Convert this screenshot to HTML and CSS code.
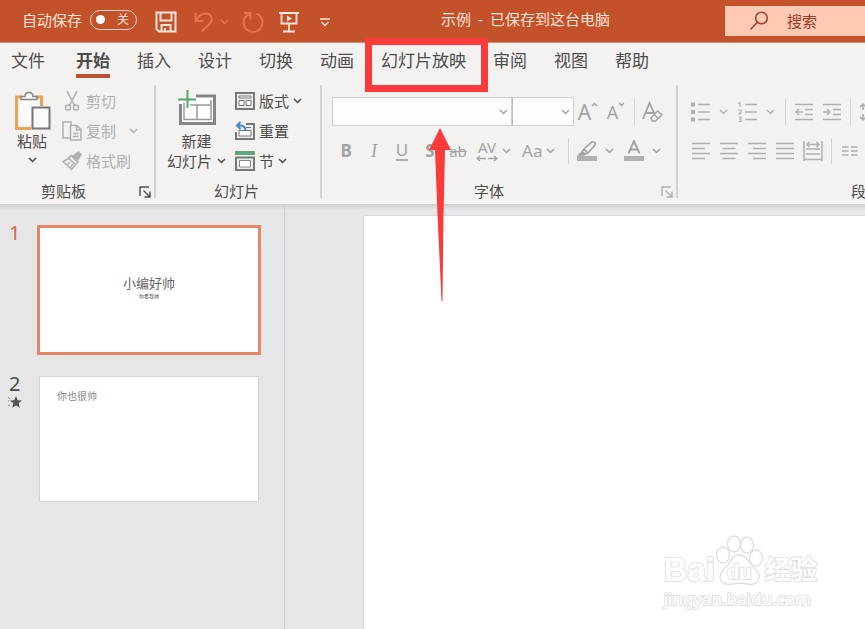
FILE: index.html
```
<!DOCTYPE html>
<html lang="zh-CN">
<head>
<meta charset="utf-8">
<title>示例</title>
<link rel="stylesheet" href="styles.css">
</head>
<body>
<svg class="defs" aria-hidden="true">
  <symbol id="chev" viewBox="0 0 9 6"><path d="M1 1l3.500 3.500L8 1" fill="none" stroke="currentColor" stroke-width="1.500"/></symbol>
  <symbol id="launch" viewBox="0 0 12 12"><path d="M1 10V1h9M4.500 4.500l6 6M11 5.500V11H5.500" fill="none" stroke="currentColor" stroke-width="1.400"/></symbol>
</svg>
<header class="titlebar">
  <label class="autosave">自动保存
    <span class="toggle"><input type="checkbox" role="switch"><span>关</span></span>
  </label>
  <div class="quick">
    <button aria-label="保存"><svg width="22" height="22" viewBox="0 0 22 22" fill="none" stroke="currentColor" stroke-width="2"><path d="M1.500 1.500h19v19H4l-2.500-2.500zM5.500 2v7.500h11V2M6.500 20v-6h9v6M10 20v-3"/></svg></button>
    <button class="faded undo" aria-label="撤消"><svg width="20" height="22" viewBox="0 0 20 22" fill="none" stroke="currentColor" stroke-width="2"><path d="M1.500 2v8h8M2 9.500C5 4 9 2 12.500 2.500c5 .7 7 6 3.500 10L8 20.500"/></svg><svg width="9" height="6"><use href="#chev"/></svg></button>
    <button class="faded" aria-label="恢复"><svg width="22" height="22" viewBox="0 0 22 22" fill="none" stroke="currentColor" stroke-width="2"><path d="M2 2h6.500v6.500M8 3C3.500 4.500 1.500 8 1.500 11.500a9.500 9.500 0 0 0 19 0c0-4-2.500-7.500-6-9"/></svg></button>
    <button class="present" aria-label="从头开始"><svg width="20" height="22" viewBox="0 0 20 22" fill="none" stroke="currentColor" stroke-width="1.800"><path d="M0 2h20M2.500 2v10.500h15V2M10 12.500V20M4 20.500h12"/><path d="M8 4.500l5 3-5 3z" fill="currentColor" stroke="none"/></svg></button>
    <button class="more" aria-label="自定义快速访问工具栏"><svg width="10" height="9" viewBox="0 0 10 9" fill="none" stroke="currentColor" stroke-width="1.500"><path d="M0 1h10M1.500 4L5 7.500 8.500 4"/></svg></button>
  </div>
  <h1 class="doc"><span>示例</span><span>-</span><span>已保存到这台电脑</span></h1>
  <label class="search">
    <svg width="20" height="20" viewBox="0 0 20 20" fill="none" stroke="currentColor" stroke-width="1.600"><circle cx="12.500" cy="7" r="5.800"/><path d="M8.500 11L1.500 18.500"/></svg>
    <input type="text" placeholder="搜索" aria-label="搜索">
  </label>
</header>

<nav class="tabs">
  <a href="#" class="file">文件</a>
  <a href="#" class="active">开始</a>
  <a href="#">插入</a>
  <a href="#">设计</a>
  <a href="#">切换</a>
  <a href="#">动画</a>
  <a href="#" class="marked">幻灯片放映
    <svg class="marker" width="123" height="263" viewBox="0 0 123 263" aria-hidden="true"><rect x="3.500" y="3.500" width="116" height="47" fill="none" stroke="#fb3a3a" stroke-width="7"/><path d="M75 90l11 22h-6l-1.500 65-1 86h-1L72.500 177 70 112h-6z" fill="#fb3a3a"/></svg>
  </a>
  <a href="#">审阅</a>
  <a href="#">视图</a>
  <a href="#">帮助</a>
</nav>

<section class="ribbon">
  <div class="group clipboard">
    <div class="body">
      <button class="big paste">
        <svg width="38" height="40" viewBox="0 0 38 40" fill="none"><path d="M9 6H3.500v31.500H18M23 6h5.500v9" stroke="#e9a453" stroke-width="3"/><path d="M7 8h18v8h-7v18H7z" fill="#fcfcfd"/><path d="M8 8.500V5.500h4C12 0 20 0 20 5.500h4v3z" fill="#fafafa" stroke="#858585" stroke-width="1.500"/><path d="M19.500 16.500h17v21h-17z" fill="#fafafd" stroke="#777" stroke-width="2"/></svg>
        <span>粘贴</span>
        <svg width="9" height="6"><use href="#chev"/></svg>
      </button>
      <div class="stack">
        <button class="small off"><svg width="20" height="20" viewBox="0 0 20 20" fill="none" stroke="currentColor" stroke-width="1.500"><path d="M5 0l7.500 14.500M15 0L7.500 14.500"/><circle cx="6" cy="16.500" r="2.500"/><circle cx="14" cy="16.500" r="2.500"/></svg><span>剪切</span></button>
        <button class="small off"><svg width="20" height="20" viewBox="0 0 20 20" fill="none" stroke="currentColor" stroke-width="1.500"><path d="M8 17H1V1h8v3"/><path d="M8.500 4.500h6.500l4 4v10.500H8.500zM14.500 5v4H19M11 12.500h5.500M11 15.500h5.500"/></svg><span>复制</span><svg class="gap" width="9" height="6"><use href="#chev"/></svg></button>
        <button class="small off"><svg width="20" height="20" viewBox="0 0 20 20" fill="none" stroke="currentColor" stroke-width="1.500"><path d="M9 4.500l7 6.500-2.500 2.500-7-6.500zM7 7.500L1 10.500l8.500 8 4-5M5 14l3-3M8 17l3-4"/><path d="M10 5.500l5 4.500 4-6.500-2.500-2.500z" fill="currentColor"/></svg><span>格式刷</span></button>
      </div>
    </div>
    <div class="foot"><span>剪贴板</span><button class="launch" aria-label="剪贴板选项"><svg width="12" height="12"><use href="#launch"/></svg></button></div>
  </div>

  <div class="group slides">
    <div class="body">
      <button class="big new">
        <svg width="40" height="38" viewBox="0 0 40 38" fill="none"><path d="M4 8h34v27H4z" fill="#fff"/><path d="M19 7h18.500v27.500h-34V15" stroke="#858585" stroke-width="3"/><path d="M8 16h26M20 16v15M7 14v16.500h27V11" stroke="#999" stroke-width="1.500"/><path d="M0 10h19M10.500 0v19" stroke="#f3f2f1" stroke-width="5"/><path d="M1 10.500h18M10.500 1v18" stroke="#55a873" stroke-width="2"/></svg>
        <span>新建</span>
        <span class="line">幻灯片<svg width="9" height="6"><use href="#chev"/></svg></span>
      </button>
      <div class="stack">
        <button class="small"><svg width="20" height="18" viewBox="0 0 20 18" fill="none" stroke="#777"><path d="M1 1h18v16H1z" fill="#ededed" stroke-width="2"/><path d="M4 4h12v2H4zM4 8.500h5v5H4zM11 8.500h5v5h-5z" fill="#fff"/></svg><span>版式</span><svg width="9" height="6"><use href="#chev"/></svg></button>
        <button class="small"><svg width="20" height="20" viewBox="0 0 20 20" fill="none" stroke="#777"><path d="M11 3h8v15H1V11" fill="#ededed" stroke-width="2"/><path d="M4 9.500h12v5.500H4zM11 6.500h5" fill="#fff"/><path d="M5.500 1L2 4.500 5.500 8M2.500 4.500h3c3.500 0 5 2 5 5.500" stroke="#3e8ccb" stroke-width="2"/></svg><span>重置</span></button>
        <button class="small"><svg width="20" height="20" viewBox="0 0 20 20" fill="none"><path d="M0 0h20v4H0z" fill="#5da57b"/><path d="M1 6.500h18V19H1z" fill="#ededed" stroke="#777" stroke-width="2"/><path d="M4.500 9.500h11v6.500h-11z" fill="#fff" stroke="#888"/></svg><span>节</span><svg width="9" height="6"><use href="#chev"/></svg></button>
      </div>
    </div>
    <div class="foot"><span>幻灯片</span></div>
  </div>

  <div class="group font">
    <div class="rows">
      <div class="row">
        <button class="combo family" aria-label="字体"><svg width="9" height="6"><use href="#chev"/></svg></button>
        <button class="combo size" aria-label="字号"><svg width="9" height="6"><use href="#chev"/></svg></button>
        <button class="tool grow" aria-label="增大字号"><span>A</span><svg width="7" height="5"><path d="M1 4l2.500-2.500L6 4" fill="none" stroke="currentColor" stroke-width="1.400"/></svg></button>
        <button class="tool grow shrink" aria-label="减小字号"><span>A</span><svg width="7" height="5"><path d="M1 1l2.500 2.500L6 1" fill="none" stroke="currentColor" stroke-width="1.400"/></svg></button>
        <i class="sep"></i>
        <button class="tool" aria-label="清除格式"><svg width="22" height="22" viewBox="0 0 22 22" fill="none" stroke="currentColor" stroke-width="1.800"><path d="M1 18L7.500 2 13 14M3.500 12h8"/><path d="M15.500 10l4.500 3.500-6.500 6.500h-3L9 17z" fill="#f3f2f1" stroke-width="1.400"/><path d="M12 13.500l4.500 4" stroke-width="1.400"/></svg></button>
      </div>
      <div class="row">
        <button class="tool"><b class="bold">B</b></button>
        <button class="tool"><span class="ital">I</span></button>
        <button class="tool"><span class="under">U</span></button>
        <button class="tool"><b class="bold">S</b></button>
        <button class="tool"><s>ab</s></button>
        <button class="split tight" aria-label="字符间距"><span class="kern">AV<svg width="22" height="7" viewBox="0 0 22 7" fill="none" stroke="currentColor" stroke-width="1.300"><path d="M10 3.500H1M4 1L1 3.500 4 6M12 3.500h9M18 1l3 2.500L18 6"/></svg></span><svg width="9" height="6"><use href="#chev"/></svg></button>
        <button class="split tight case" aria-label="更改大小写"><span>Aa</span><svg width="9" height="6"><use href="#chev"/></svg></button>
        <i class="sep"></i>
        <button class="split" aria-label="突出显示"><svg width="20" height="22" viewBox="0 0 20 22" fill="none" stroke="currentColor" stroke-width="1.600"><path d="M0 16h20v5H0z" fill="#b0b0b0" stroke="none"/><path d="M7 9l8-7c2-1 4 1 3 3l-7 8zM7 9l-2 3 3 2 3-1"/><path d="M5 12l-3 3h5l1-1z" fill="currentColor"/></svg><svg width="9" height="6"><use href="#chev"/></svg></button>
        <button class="split" aria-label="字体颜色"><svg width="20" height="22" viewBox="0 0 20 22" fill="none" stroke="currentColor" stroke-width="1.900"><path d="M0 16h20v5H0z" fill="#b0b0b0" stroke="none"/><path d="M4.500 13.500L10 1l5.500 12.500M6.500 9.500h7"/></svg><svg width="9" height="6"><use href="#chev"/></svg></button>
      </div>
    </div>
    <div class="foot"><span>字体</span><button class="launch off" aria-label="字体选项"><svg width="12" height="12"><use href="#launch"/></svg></button></div>
  </div>

  <div class="group para">
    <div class="rows">
      <div class="row">
        <button class="split" aria-label="项目符号"><svg width="20" height="20" viewBox="0 0 20 20" stroke="currentColor"><path d="M7 2.500h12M7 10h12M7 17.500h12" stroke-width="1.500"/><path d="M0 2.500h4M0 10h4M0 17.500h4" stroke-width="4"/></svg><svg width="9" height="6"><use href="#chev"/></svg></button>
        <button class="split" aria-label="编号"><svg width="20" height="20" viewBox="0 0 20 20" fill="none" stroke="currentColor"><path d="M7 2.500h12M7 10h12M7 17.500h12" stroke-width="1.500"/><path d="M0 1.500L2 .5V5M.5 8h2.500v2L.5 12H3.500M.5 15H3v2H1h2v2.500H.5" stroke-width="1.100"/></svg><svg width="9" height="6"><use href="#chev"/></svg></button>
        <i class="sep"></i>
        <button class="tool" aria-label="减少缩进"><svg width="20" height="20" viewBox="0 0 20 20" fill="none" stroke="currentColor" stroke-width="1.500"><path d="M1 2.500h18M1 17.500h18M11 7.500h8M11 12.500h8M9 10H2M5 7l-3 3 3 3"/></svg></button>
        <button class="tool" aria-label="增加缩进"><svg width="20" height="20" viewBox="0 0 20 20" fill="none" stroke="currentColor" stroke-width="1.500"><path d="M1 2.500h18M1 17.500h18M11 7.500h8M11 12.500h8M1 10h7M5 7l3 3-3 3"/></svg></button>
        <i class="sep"></i>
        <button class="tool" aria-label="行距"><svg width="20" height="20" viewBox="0 0 20 20" fill="none" stroke="currentColor" stroke-width="1.500"><path d="M4 2v6M1 5l3-3 3 3M4 12v6M1 15l3 3 3-3M10 3h9M10 10h9M10 17h9"/></svg></button>
      </div>
      <div class="row">
        <button class="tool" aria-label="左对齐"><svg width="20" height="20" viewBox="0 0 20 20" stroke="currentColor" stroke-width="1.500"><path d="M1 2.500h18M1 7.500h13M1 12.500h18M1 17.500h13"/></svg></button>
        <button class="tool" aria-label="居中"><svg width="20" height="20" viewBox="0 0 20 20" stroke="currentColor" stroke-width="1.500"><path d="M1 2.500h18M3.500 7.500h13M1 12.500h18M3.500 17.500h13"/></svg></button>
        <button class="tool" aria-label="右对齐"><svg width="20" height="20" viewBox="0 0 20 20" stroke="currentColor" stroke-width="1.500"><path d="M1 2.500h18M6 7.500h13M1 12.500h18M6 17.500h13"/></svg></button>
        <button class="tool" aria-label="两端对齐"><svg width="20" height="20" viewBox="0 0 20 20" stroke="currentColor" stroke-width="1.500"><path d="M1 2.500h18M1 7.500h18M1 12.500h18M1 17.500h18"/></svg></button>
        <button class="tool" aria-label="分散对齐"><svg width="20" height="22" viewBox="0 0 20 22" fill="none" stroke="currentColor" stroke-width="1.500"><path d="M1 1v20M19 1v20M3 9h14M3 14h14M1 19.500h18M4 4.500h12M6.500 2L4 4.500 6.500 7M13.500 2L16 4.500 13.500 7"/></svg></button>
        <i class="sep"></i>
        <button class="tool" aria-label="分栏"><svg width="18" height="20" viewBox="0 0 18 20" stroke="currentColor" stroke-width="1.500"><path d="M1 6h6.500M1 10h6.500M1 14h6.500M10 6h6.500M10 10h6.500M10 14h6.500"/></svg></button>
      </div>
    </div>
    <div class="foot"><span>段落</span></div>
  </div>
</section>

<main class="work">
  <aside class="thumbs">
    <div class="thumb current">
      <div class="num">1</div>
      <div class="slide cover"><p class="heading">小编好帅</p><p class="sub">你看我帅</p></div>
    </div>
    <div class="thumb">
      <div class="num">2<svg width="14" height="14" viewBox="0 0 14 14"><path d="M8 1l1.700 4.200 4.300.3-3.300 2.800 1.100 4.500L8 10.500l-3.800 2.300 1.100-4.500L2 5.500l4.300-.3z" fill="#555"/><path d="M0 2l2 2M0 6h1M0 11l2-1" stroke="#888"/></svg></div>
      <div class="slide"><p class="text">你也很帅</p></div>
    </div>
  </aside>
  <section class="editor">
    <div class="canvas">
      <div class="watermark">
        <div class="brand"><span class="bai">Bai</span><span class="paw"><svg width="50" height="52" viewBox="0 0 50 52" fill="#fff" stroke="#dedede" stroke-width="1.300"><ellipse cx="8" cy="20" rx="6.500" ry="8"/><ellipse cx="19" cy="9" rx="6.500" ry="8"/><ellipse cx="32" cy="10" rx="6.500" ry="8"/><ellipse cx="41" cy="23" rx="6.500" ry="8"/><path d="M24 20c7 0 9 6 13 11 5 4 8 8 7 12-1 6-7 7-11 6-6-1-11-1-16 0-6 1-12-1-12-7 0-5 4-8 8-12 3-5 5-10 11-10z"/></svg><span class="du">du</span></span><span class="exp">经验</span></div>
        <div class="url">jingyan.baidu.com</div>
      </div>
    </div>
  </section>
</main>
</body>
</html>
```
FILE: styles.css
```
* { box-sizing: border-box; }
body {
  margin: 0;
  min-height: 100vh;
  display: flex;
  flex-direction: column;
  overflow: hidden;
  background: #e6e6e8;
  color: #4c4c4c;
  font: 15px/20px "Noto Sans", "Noto Sans CJK SC", sans-serif;
}
.defs { position: absolute; width: 0; height: 0; }
button {
  border: 0;
  padding: 0;
  background: none;
  color: inherit;
  font: inherit;
}
svg { display: block; flex: none; }
p, h1 { margin: 0; font-weight: 400; }

/* title bar */
.titlebar {
  display: flex;
  align-items: center;
  height: 43px;
  padding-left: 22px;
  background: #c3512a;
  border-bottom: 1px solid #d98c72;
  color: #ffe4d8;
}
.autosave { display: flex; align-items: center; gap: 8px; padding-bottom: 3px; }
.toggle {
  display: flex;
  align-items: center;
  justify-content: space-between;
  width: 47px;
  height: 20px;
  padding: 0 7px 0 5px;
  border: 1px solid #ffd0bd;
  border-radius: 10px;
  font-size: 12px;
}
.toggle input {
  appearance: none;
  width: 9px;
  height: 9px;
  margin: 0;
  border-radius: 50%;
  background: #fff;
}
.quick { display: flex; align-items: center; gap: 17px; margin-left: 18px; padding-top: 2px; }
.quick button { display: flex; align-items: center; gap: 6px; }
.quick .faded { color: #e9714b; }
.quick .undo { margin-right: -4px; }
.quick .present { margin-left: -2px; }
.quick .more { margin-left: 4px; }
.doc {
  flex: 1;
  display: flex;
  justify-content: center;
  gap: 7px;
  padding: 0 4px 5px 0;
  font-size: 15px;
  line-height: 20px;
}
.search {
  flex: 0 0 140px;
  min-width: 0;
  display: flex;
  align-items: center;
  gap: 18px;
  height: 30px;
  padding-left: 24px;
  background: #ffc9b3;
  color: #a0432c;
}
.search input {
  flex: 1;
  width: 0;
  min-width: 0;
  padding: 0;
  border: 0;
  background: none;
  font: inherit;
}
.search input::placeholder { color: #963d2b; opacity: 1; }

/* tabs */
.tabs {
  display: flex;
  gap: 27px;
  height: 42px;
  padding: 5px 11px 0;
  background: #f3f2f1;
  font-size: 17px;
  line-height: 26px;
  white-space: nowrap;
}
.tabs a { color: inherit; text-decoration: none; }
.tabs .file { margin-right: 4px; }
.tabs .active { height: 30px; border-bottom: 4px solid #b9532f; font-weight: 700; }
.marked { position: relative; }
.marker { position: absolute; left: -16px; top: -10px; z-index: 2; pointer-events: none; }

/* ribbon */
.ribbon {
  display: flex;
  height: 119px;
  padding-bottom: 6px;
  overflow: hidden;
  background: #f3f2f1;
}
.group {
  display: flex;
  flex-direction: column;
  flex: none;
  justify-content: space-between;
  border-right: 2px solid #d4d3d2;
}
.body { display: flex; }
.foot { display: flex; justify-content: center; position: relative; height: 18px; line-height: 22px; }
.launch { position: absolute; right: 3px; bottom: 0; }
.off { color: #b0b0b0; }
.big { display: flex; flex-direction: column; align-items: center; }
.big .line { display: flex; align-items: center; gap: 5px; }
.stack { display: flex; flex-direction: column; }
.small { display: flex; align-items: center; gap: 4px; height: 30px; }
.small .gap { margin-left: 9px; }
.clipboard { padding-left: 12px; width: 156px; }
.clipboard .foot { margin-left: -12px; padding-right: 27px; }
.paste { padding-top: 6px; width: 40px; }
.paste > svg:last-child { margin-top: 6px; }
.clipboard .stack { margin-left: 10px; padding-top: 1px; }
.slides { padding: 0 18px 0 11px; }
.slides .stack { margin-left: 9px; padding-top: 1px; }
.slides .foot { padding-left: 4px; }
.new { padding-top: 4px; }
.new > span:first-of-type { margin-top: 4px; }

.font { padding-left: 10px; width: 356px; }
.font .foot { margin-left: -10px; padding-right: 20px; }
.rows { padding-top: 7px; color: #a3a3a3; }
.row { display: flex; align-items: center; height: 39px; }
.combo {
  display: flex;
  align-items: center;
  justify-content: flex-end;
  height: 29px;
  padding-right: 3px;
  border: 1px solid #d0d0d0;
  background: #fdfdfe;
}
.family { width: 180px; }
.size { width: 62px; border-left: 1px solid #bdbdbd; }
.tool { display: flex; align-items: center; justify-content: center; flex: none; width: 28px; }
.tool s { font-size: 15px; }
.grow { align-items: flex-start; font-size: 21px; }
.shrink { font-size: 18px; }
.bold { font-size: 17px; }
.ital { font: italic 18px/20px "Liberation Serif", serif; }
.under { border-bottom: 2px solid #aaa; font-size: 17px; line-height: 18px; }
.split { display: flex; align-items: center; flex: none; gap: 8px; width: 47px; padding-left: 4px; }
.tight { gap: 4px; width: 46px; }
.case { font-size: 17px; }
.kern { display: flex; flex-direction: column; align-items: center; width: 22px; line-height: 15px; }
.sep { flex: none; width: 1px; height: 26px; margin: 0 4px; background: #d4d3d2; }

.para { flex: 1 0 187px; padding-left: 9px; border: 0; }
.para .rows { color: #b0b0b0; }
.para .foot { justify-content: flex-start; padding-left: 164px; white-space: nowrap; }

/* work area */
.work {
  flex: 1;
  display: flex;
  background: linear-gradient(#cfcfcf, #e6e6e8 6px);
}
.thumbs {
  flex: 0 0 285px;
  display: flex;
  flex-direction: column;
  gap: 21px;
  padding: 21px 23px 0 9px;
  border-right: 1px solid #cdcdce;
}
.thumb { display: grid; grid-template-columns: 28px 1fr; }
.num { font-size: 20px; line-height: 16px; }
.num svg { margin-top: 3px; margin-left: -1px; }
.current .num { color: #d6674c; }
.slide {
  aspect-ratio: 220 / 126;
  margin: 0 2px;
  border: 1px solid #d3d3d4;
  background: #fff;
}
.cover {
  display: flex;
  flex-direction: column;
  align-items: center;
  justify-content: center;
  margin: 0;
  padding-bottom: 5px;
  aspect-ratio: 224 / 130;
  border: 3px solid #e78567;
}
.heading { font-size: 13px; line-height: 16px; color: #666; }
.sub { font-size: 5px; line-height: 10px; }
.text { padding: 10px 17px; font-size: 10px; line-height: 18px; color: #888; }
.editor { flex: 1; display: flex; padding: 11px 0 0 78px; }
.canvas { flex: 1; position: relative; background: #fff; border: 1px solid #dadada; border-width: 1px 0 0 1px; }

.watermark {
  position: absolute;
  right: 48px;
  bottom: 21px;
  color: #fff;
  -webkit-text-stroke: 2px #e2e2e2;
  paint-order: stroke fill;
}
.watermark svg { paint-order: normal; }
.brand { display: flex; align-items: flex-end; height: 55px; padding-bottom: 3px; font-weight: 700; }
.bai { font: 700 33px/34px "Liberation Sans", sans-serif; }
.paw { position: relative; }
.du { position: absolute; left: 12px; bottom: 3px; font: 700 20px/24px "Liberation Sans", sans-serif; }
.exp { font-size: 26px; line-height: 36px; }
.url { font: 400 17px/18px "Noto Sans", sans-serif; }
```
